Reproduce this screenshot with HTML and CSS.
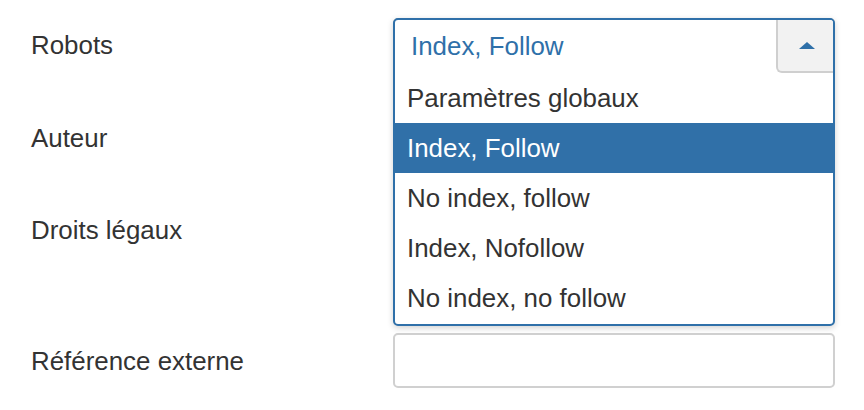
FILE: index.html
```html
<!DOCTYPE html>
<html lang="fr">
<head>
<meta charset="utf-8">
<title>Métadonnées</title>
<link rel="stylesheet" href="styles.css">
</head>
<body>
<form class="form">
  <div class="row">
    <label class="label">Robots</label>
    <div class="control">
      <div class="input select"></div>
      <div class="menu">
        <div class="menu-head">
          <span class="menu-value">Index, Follow</span>
          <span class="menu-btn"><span class="caret"></span></span>
        </div>
        <ul class="options">
          <li class="opt">Paramètres globaux</li>
          <li class="opt active">Index, Follow</li>
          <li class="opt">No index, follow</li>
          <li class="opt">Index, Nofollow</li>
          <li class="opt">No index, no follow</li>
        </ul>
      </div>
    </div>
  </div>
  <div class="row">
    <label class="label">Auteur</label>
    <div class="control"><div class="input"></div></div>
  </div>
  <div class="row row-top">
    <label class="label">Droits légaux</label>
    <div class="control"><div class="input textarea"></div></div>
  </div>
  <div class="row">
    <label class="label">Référence externe</label>
    <div class="control"><div class="input"></div></div>
  </div>
</form>
</body>
</html>
```
FILE: styles.css
```css
* { box-sizing: border-box; }
html, body { margin: 0; padding: 0; background: #fff; }
body {
  font-family: "Liberation Sans", Arial, Helvetica, sans-serif;
  font-size: 25.9px;
  color: #333;
  width: 864px;
  height: 410px;
  overflow: hidden;
}
.form {
  display: flex;
  flex-direction: column;
  gap: 38px;
  padding: 18px 0 0 31px;
}
.row {
  display: flex;
  align-items: center;
}
.row-top { align-items: flex-start; }
.row-top .label { padding-top: 13px; }
.label {
  width: 362px;
  line-height: 28px;
}
.control {
  position: relative;
  width: 442px;
}
.input {
  height: 55px;
  border: 2px solid #d0d0d0;
  border-radius: 5px;
  background: #fff;
}
.select { height: 54px; }
.textarea { height: 92px; }

.menu {
  position: absolute;
  left: 0;
  top: 0;
  z-index: 10;
  width: 442px;
  height: 308px;
  background: #fff;
  border: 2px solid #2f70a9;
  border-radius: 5px;
  box-shadow: 0 2px 6px rgba(0, 0, 0, 0.18);
  overflow: hidden;
}
.menu-head {
  display: flex;
  align-items: stretch;
  height: 53px;
}
.menu-value {
  display: flex;
  align-items: center;
  padding-left: 16px;
  color: #2f70a9;
}
.menu-btn {
  margin-left: auto;
  width: 57px;
  display: flex;
  align-items: center;
  justify-content: center;
  background: #f2f2f2;
  border-left: 2px solid #cfcfcf;
  border-bottom: 2px solid #cfcfcf;
  border-bottom-left-radius: 6px;
}
.caret {
  width: 0;
  height: 0;
  border-left: 8px solid transparent;
  border-right: 8px solid transparent;
  border-bottom: 7px solid #2f70a9;
  margin-left: 2px;
}
.options {
  list-style: none;
  margin: 0;
  padding: 0;
}
.opt {
  display: flex;
  align-items: center;
  height: 50px;
  padding-left: 12px;
  color: #333;
}
.opt.active {
  background: #3070a8;
  color: #fff;
}
```
